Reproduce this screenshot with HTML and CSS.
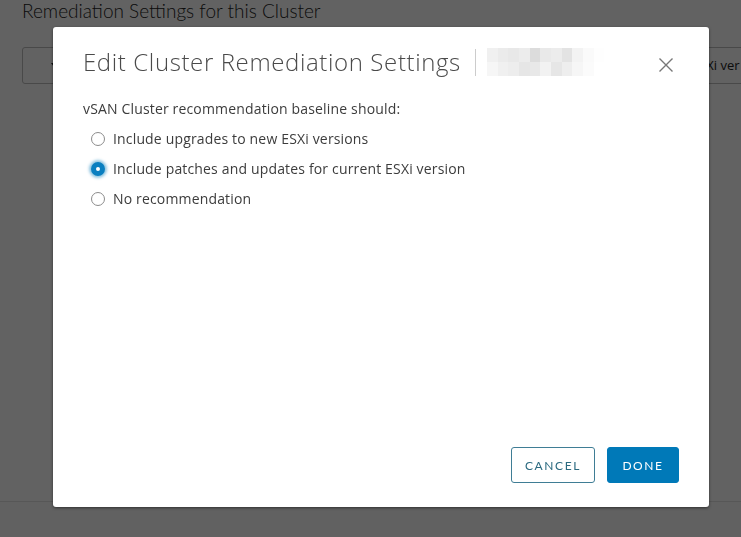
FILE: index.html
```html
<!DOCTYPE html>
<html>
<head>
<meta charset="utf-8">
<link rel="stylesheet" href="styles.css">
</head>
<body>
<div class="page">
  <h2 class="page-title">Remediation Settings for this Cluster</h2>
  <div class="toolbar">
    <div class="select-box"><span class="chev"></span></div>
    <div class="right-box">ESXi ver</div>
  </div>
  <div class="page-fill"></div>
  <div class="page-footer"></div>
</div>
<div class="backdrop"></div>
<div class="modal">
  <div class="modal-header">
    <h3 class="modal-title">Edit Cluster Remediation Settings</h3>
    <span class="sep"></span>
    <div class="blur">
      <i style="background:#f0f0f0"></i><i style="background:#ebebeb"></i><i style="background:#e8e8e8"></i><i style="background:#ececec"></i><i style="background:#dcdcdc"></i><i style="background:#e9e9e9"></i><i style="background:#ececec"></i><i style="background:#e3e3e3"></i><i style="background:#f3f3f3"></i><i style="background:#fafafa"></i><i style="background:#fefefe"></i>
      <i style="background:#f6f6f6"></i><i style="background:#f0f0f0"></i><i style="background:#ededed"></i><i style="background:#e6e6e6"></i><i style="background:#e8e8e8"></i><i style="background:#f2f2f2"></i><i style="background:#e6e6e6"></i><i style="background:#eeeeee"></i><i style="background:#f6f6f6"></i><i style="background:#fbfbfb"></i><i style="background:#ffffff"></i>
    </div>
    <button class="close" aria-label="Close">
      <svg width="16" height="16" viewBox="0 0 16 16"><path d="M1.5 1.5 L14.5 14.5 M14.5 1.5 L1.5 14.5" stroke="#777" stroke-width="1.4" fill="none"/></svg>
    </button>
  </div>
  <div class="modal-body">
    <p class="question">vSAN Cluster recommendation baseline should:</p>
    <label class="radio"><span class="circle"></span>Include upgrades to new ESXi versions</label>
    <label class="radio"><span class="circle checked"></span>Include patches and updates for current ESXi version</label>
    <label class="radio"><span class="circle"></span>No recommendation</label>
  </div>
  <div class="modal-footer">
    <button class="btn btn-outline">CANCEL</button>
    <button class="btn btn-primary">DONE</button>
  </div>
</div>
</body>
</html>
```
FILE: styles.css
```css
html, body {
  margin: 0;
  padding: 0;
  height: 100%;
}
body {
  background: #fcfcfc;
  font-family: "Open Sans", "Lato", sans-serif;
  overflow: hidden;
}
.page {
  height: 537px;
  display: flex;
  flex-direction: column;
}
.page-title {
  margin: 0;
  padding: 0 0 0 22px;
  font-family: "Lato", sans-serif;
  font-weight: 300;
  font-size: 19px;
  line-height: 22px;
  color: #222;
}
.toolbar {
  margin-top: 25px;
  display: flex;
  justify-content: space-between;
  height: 37px;
}
.select-box {
  margin-left: 22px;
  width: 200px;
  border: 1px solid #bbb;
  border-radius: 3px;
}
.chev {
  display: block;
  margin: 15px 0 0 28px;
  width: 0;
  height: 0;
  border-left: 3px solid transparent;
  border-right: 3px solid transparent;
  border-top: 4px solid #222;
}
.right-box {
  width: 56px;
  border-top: 1px solid #bbb;
  border-bottom: 1px solid #bbb;
  box-sizing: border-box;
  padding-left: 7px;
  font-size: 13px;
  line-height: 35px;
  color: #222;
  white-space: nowrap;
}
.page-fill {
  flex: 1;
}
.page-footer {
  height: 35px;
  border-top: 1px solid #e0e0e0;
  background: #fafafa;
}
.backdrop {
  position: fixed;
  inset: 0;
  background: rgba(0, 0, 0, 0.61);
}
.modal {
  position: absolute;
  left: 53px;
  top: 27px;
  width: 656px;
  height: 480px;
  box-sizing: border-box;
  background: #fff;
  border-radius: 3px;
  box-shadow: 0 1px 3px rgba(0, 0, 0, 0.5);
  padding: 19px 30px 24px 30px;
  display: flex;
  flex-direction: column;
}
.modal-header {
  display: flex;
  align-items: center;
  height: 32px;
}
.modal-title {
  margin: 0;
  font-weight: 300;
  font-size: 24px;
  line-height: 32px;
  color: #4a4a4a;
  letter-spacing: 0.62px;
}
.sep {
  width: 1px;
  height: 27px;
  background: #ccc;
  margin-left: 14px;
}
.blur {
  margin-left: 11px;
  display: grid;
  grid-template-columns: repeat(11, 10.7px);
  grid-template-rows: 14px 14px;
}
.blur i {
  display: block;
}
.close {
  margin-left: auto;
  margin-right: 5px;
  background: none;
  border: 0;
  padding: 0;
  margin-top: 6px;
  width: 16px;
  height: 16px;
  display: flex;
}
.modal-body {
  flex: 1;
  padding-top: 22px;
  font-size: 14px;
  color: #3c3c3c;
  letter-spacing: 0.16px;
}
.question {
  margin: 0 0 6px 0;
  line-height: 18px;
}
.radio {
  display: flex;
  align-items: center;
  height: 30px;
  padding-left: 8px;
  line-height: 18px;
}
.circle {
  width: 14px;
  height: 14px;
  border: 1px solid #8c8c8c;
  border-radius: 50%;
  box-sizing: border-box;
  margin-right: 8px;
  background: #fff;
  flex: none;
}
.circle.checked {
  border: 5px solid #0a7fc0;
  background: #fff;
  box-shadow: 0 0 3px 2px rgba(0, 121, 184, 0.45);
}
.modal-footer {
  display: flex;
  justify-content: flex-end;
  gap: 12px;
}
.btn {
  height: 36px;
  box-sizing: border-box;
  border-radius: 3px;
  font-family: "Lato", "Open Sans", sans-serif;
  font-size: 12px;
  letter-spacing: 1.6px;
  padding: 0 12px;
}
.btn-outline {
  width: 84px;
  background: #fff;
  border: 1px solid #3f7d95;
  color: #2b6a80;
}
.btn-primary {
  width: 72px;
  background: #0079b8;
  border: 1px solid #0079b8;
  color: #fff;
}
```
